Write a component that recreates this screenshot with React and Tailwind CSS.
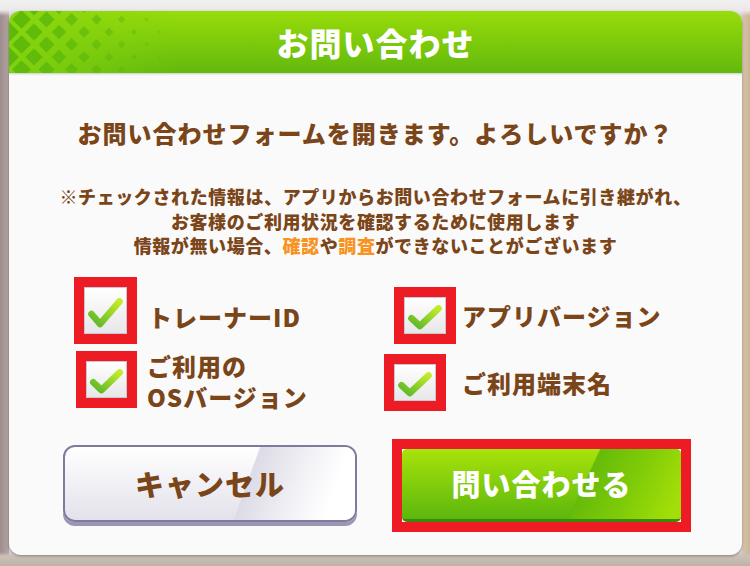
import React from 'react';

const brown = 'text-[#7a4519]';

const Diamonds = () => {
  const shapes = [];
  for (let j = 0; j < 7; j++) {
    for (let i = 0; i < 9; i++) {
      const cx = i * 25 + (j % 2 ? 12.5 : 0);
      const cy = j * 12.5 - 4;
      const r = 10 * (1 - cx / 180);
      if (r < 1.5) continue;
      const op = Math.max(0.25, 1 - cx / 220);
      shapes.push(
        <polygon
          key={`${i}-${j}`}
          points={`${cx},${cy - r} ${cx + r},${cy} ${cx},${cy + r} ${cx - r},${cy}`}
          fill="#5db80a"
          opacity={op}
        />
      );
    }
  }
  return (
    <svg className="absolute left-0 top-0" width="200" height="62" viewBox="0 0 200 62">
      <defs>
        <linearGradient id="fadeL" x1="0" x2="1" y1="0" y2="0">
          <stop offset="0" stopColor="#84d40e" stopOpacity="0.9" />
          <stop offset="1" stopColor="#84d40e" stopOpacity="0" />
        </linearGradient>
      </defs>
      <rect x="0" y="0" width="170" height="62" fill="url(#fadeL)" />
      {shapes}
    </svg>
  );
};

const Check = ({ w, h }) => (
  <div className="relative h-full w-full bg-[linear-gradient(to_bottom,#ffffff,#e7e7e9)] border border-[#c9c8d2]">
    <svg className="absolute inset-0" width="100%" height="100%" viewBox={`0 0 ${w} ${h}`}>
      <defs>
        <linearGradient id="chk" x1="0" x2="1" y1="1" y2="0">
          <stop offset="0" stopColor="#5bb52a" />
          <stop offset="1" stopColor="#c3ec2a" />
        </linearGradient>
      </defs>
      <path
        d={`M${w * 0.16} ${h * 0.58} L${w * 0.37} ${h * 0.8} L${w * 0.84} ${h * 0.3}`}
        fill="none"
        stroke="url(#chk)"
        strokeWidth="7"
        strokeLinecap="round"
        strokeLinejoin="round"
      />
    </svg>
  </div>
);

const Marked = ({ className, w, h }) => (
  <div className={`shrink-0 border-[10px] border-[#ed1c24] ${className}`}>
    <Check w={w} h={h} />
  </div>
);

export default function App() {
  return (
    <div className="h-[566px] w-[750px] overflow-hidden bg-[linear-gradient(to_bottom,#f1f0f0_0px,#ebe9e9_10px,transparent_16px,transparent_552px,#cbc1b8_556px,#bfb2a6_566px),linear-gradient(to_right,#9e8d8d_0px,#b5a4a4_9px,#d8d4d4_9px,#d8d4d4_741px,#d7c4a8_743px,#cbb596_750px)] font-['Noto_Sans_CJK_JP',sans-serif]">
      <div className="pt-[11px] pl-[9px] pr-[8px]">
        <div className="flex h-[544px] flex-col overflow-hidden rounded-[12px] bg-[#fafafa] shadow-[0_1px_3px_rgba(0,0,0,0.35)]">
          <div className="relative flex h-[62px] shrink-0 items-center justify-center bg-[linear-gradient(to_bottom,#98dc0a,#62b90d)] shadow-[0_1px_2px_rgba(0,0,0,0.2)]">
            <Diamonds />
            <h1 className="relative text-[32px] font-black tracking-[1px] text-white">お問い合わせ</h1>
          </div>

          <p className={`mt-[45px] text-center text-[24px] font-black leading-[30px] tracking-[1px] ${brown}`}>
            お問い合わせフォームを開きます。よろしいですか？
          </p>

          <div className={`mt-[36px] text-center text-[18px] font-black leading-[24.5px] tracking-[0.6px] ${brown}`}>
            <p>※チェックされた情報は、アプリからお問い合わせフォームに引き継がれ、</p>
            <p>お客様のご利用状況を確認するために使用します</p>
            <p>
              情報が無い場合、<span className="text-[#f7931e]">確認</span>や
              <span className="text-[#f7931e]">調査</span>ができないことがございます
            </p>
          </div>

          <div className={`mt-[19.5px] flex h-[67px] pl-[65px] text-[24px] font-black tracking-[1px] ${brown}`}>
            <div className="flex w-[310px] items-center">
              <Marked className="h-[67px] w-[63px]" w={43} h={47} />
              <span className="ml-[11px] mt-[12px]">トレーナーID</span>
            </div>
            <div className="flex items-center pt-[10px]">
              <Marked className="ml-[10px] h-[57px] w-[62px]" w={42} h={37} />
              <span className="ml-[6px]">アプリバージョン</span>
            </div>
          </div>

          <div className={`mt-[7px] flex h-[60px] items-start pl-[65px] text-[24px] font-black tracking-[1px] ${brown}`}>
            <div className="flex w-[310px] items-start">
              <Marked className="ml-[2px] h-[57px] w-[61px]" w={41} h={37} />
              <span className="ml-[10px] -mt-[1px] leading-[31px]">
                ご利用の
                <br />
                OSバージョン
              </span>
            </div>
            <div className="mt-[3px] flex h-[57px] items-center">
              <Marked className="h-[57px] w-[62px]" w={42} h={37} />
              <span className="ml-[16px]">ご利用端末名</span>
            </div>
          </div>

          <div className="mt-[28px] flex items-start pl-[54px]">
            <button className="relative mt-[6px] h-[77px] w-[294px] overflow-hidden rounded-[12px] border-2 border-[#807b9e] bg-[linear-gradient(to_bottom,#ffffff,#e3e1eb)] shadow-[0_4px_0_#9a96b4]">
              <span className="absolute inset-y-0 right-0 w-[130px] bg-[linear-gradient(110deg,transparent_0%,transparent_22%,#dddbe6_23%,#f1f0f5_55%,#ffffff_80%)]" />
              <span className={`relative text-[29px] font-black tracking-[1px] ${brown}`}>キャンセル</span>
            </button>
            <div className="ml-[35px] h-[93px] w-[299px] border-[10px] border-[#ed1c24]">
              <button className="relative h-full w-full overflow-hidden rounded-[5px] border-b-[3px] border-[#3c8a0c] bg-[linear-gradient(to_bottom,#a8e30a,#5cb70d)]">
                <span className="absolute inset-y-0 right-0 w-[110px] bg-[linear-gradient(115deg,transparent_0%,transparent_20%,#66bb09_21%,#7fcb08_55%,#a2de08_90%)]" />
                <span className="relative text-[29px] font-black tracking-[1px] text-white">問い合わせる</span>
              </button>
            </div>
          </div>
        </div>
      </div>
    </div>
  );
}
